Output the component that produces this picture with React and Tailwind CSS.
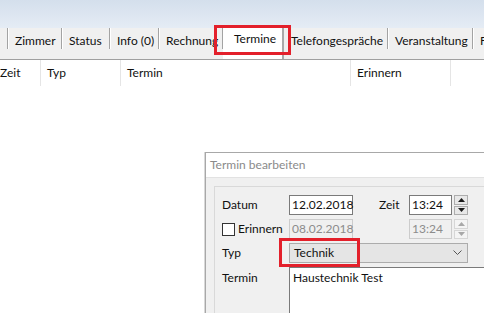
import React from "react";

const tabs = [
  { label: "", w: 6 },
  { label: "Zimmer", w: 54 },
  { label: "Status", w: 48 },
  { label: "Info (0)", w: 49 },
  { label: "Rechnung", w: 64 },
  { label: "Termine", w: 61, active: true },
  { label: "Telefongespräche", w: 104 },
  { label: "Veranstaltung", w: 85 },
  { label: "Foto", w: 40 },
];

const cols = [
  { label: "Zeit", w: 47, cls: "ml-[-6px]" },
  { label: "Typ", w: 80 },
  { label: "Termin", w: 230 },
  { label: "Erinnern", w: 100 },
  { label: "", w: 60 },
];

function Spinner({ disabled }) {
  const arrow = disabled ? "#a8a8a8" : "#1a1a1a";
  const box = disabled
    ? "border-[#d6d6d6] bg-[#f4f4f4]"
    : "border-[#adadad] bg-[#e8e8e8]";
  return (
    <div className="flex flex-col w-[16px] h-[20px] gap-[1px] pl-[2px]">
      <div className={`flex-1 border ${box} flex items-center justify-center`}>
        <svg width="7" height="4" viewBox="0 0 7 4">
          <path d="M0 4 L3.5 0 L7 4 Z" fill={arrow} />
        </svg>
      </div>
      <div className={`flex-1 border ${box} flex items-center justify-center`}>
        <svg width="7" height="4" viewBox="0 0 7 4">
          <path d="M0 0 L3.5 4 L7 0 Z" fill={arrow} />
        </svg>
      </div>
    </div>
  );
}

function Dialog() {
  return (
    <div className="absolute left-[205px] top-[152px] w-[290px] h-[170px] border border-[#a8a8a8] bg-[#f0f0f0] flex flex-col shadow-[-1px_0_0_#d8d8d8]">
      <div className="h-[25px] bg-white border-b border-[#e2e2e2] flex items-center pl-[4px] text-[12px] text-[#8a8a8a]">
        Termin bearbeiten
      </div>
      <div className="pl-[8px] pt-[8px] flex-1">
        <div className="border border-[#d9d9d9] h-full pl-[7px] pt-[8px] flex flex-col gap-[4px] text-[12px] text-[#111]">
          {/* Datum */}
          <div className="flex items-center h-[20px]">
            <span className="w-[67px]">Datum</span>
            <div className="w-[64px] h-[20px] bg-white border border-[#7a7a7a] flex items-center pl-[2px]">
              12.02.2018
            </div>
            <span className="ml-[26px] w-[30px]">Zeit</span>
            <div className="w-[43px] h-[20px] bg-white border border-[#7a7a7a] flex items-center pl-[2px]">
              13:24
            </div>
            <Spinner />
          </div>
          {/* Erinnern */}
          <div className="flex items-center h-[20px]">
            <div className="w-[67px] flex items-center">
              <span className="w-[13px] h-[13px] border border-[#333] bg-white mr-[3px]" />
              <span>Erinnern</span>
            </div>
            <div className="w-[64px] h-[20px] bg-[#f0f0f0] border border-[#cccccc] flex items-center pl-[2px] text-[#8c8c8c]">
              08.02.2018
            </div>
            <span className="ml-[26px] w-[30px]" />
            <div className="w-[43px] h-[20px] bg-[#f0f0f0] border border-[#cccccc] flex items-center pl-[2px] text-[#8c8c8c]">
              13:24
            </div>
            <Spinner disabled />
          </div>
          {/* Typ */}
          <div className="flex items-center h-[20px]">
            <span className="w-[67px]">Typ</span>
            <div className="w-[179px] h-[20px] bg-[#e5e5e5] border border-[#acacac] flex items-center justify-between pl-[4px] pr-[5px]">
              <span>Technik</span>
              <svg width="9" height="6" viewBox="0 0 9 6">
                <path d="M0.5 0.5 L4.5 4.5 L8.5 0.5" fill="none" stroke="#555" strokeWidth="1" />
              </svg>
            </div>
          </div>
          {/* Termin */}
          <div className="flex items-start flex-1">
            <span className="w-[67px] pt-[2px]">Termin</span>
            <div className="flex-1 h-full bg-white border border-[#7a7a7a] pl-[3px] pt-[1px]">
              Haustechnik Test
            </div>
          </div>
        </div>
      </div>
    </div>
  );
}

export default function App() {
  return (
    <div
      className="relative w-[484px] h-[313px] overflow-hidden bg-white flex flex-col"
      style={{ fontFamily: 'Lato, "Noto Sans", sans-serif' }}
    >
      {/* window header gradient */}
      <div className="h-[28px] bg-gradient-to-b from-[#d4dfec] to-[#e5ecf5]" />

      {/* tab strip */}
      <div className="h-[21px] bg-[#f0f0f0] flex text-[12px] text-[#111]">
        {tabs.map((t, i) =>
          t.active ? (
            <div
              key={i}
              className="relative z-10 mt-[-2px] h-[33px] bg-white border-r-2 border-[#a9a9a9] pl-[11px] pt-[5px] leading-[16px] shrink-0"
              style={{ width: t.w }}
            >
              {t.label}
            </div>
          ) : (
            <div
              key={i}
              className="h-[21px] border-r border-[#a3a3a3] shadow-[1px_0_0_#ffffff] pl-[7px] pt-[5px] leading-[16px] whitespace-nowrap overflow-hidden shrink-0"
              style={{ width: t.w }}
            >
              {t.label}
            </div>
          )
        )}
      </div>
      <div className="h-[11px] bg-[#f0f0f0] border-b border-[#a0a0a0]" />

      {/* list header */}
      <div className="h-[26px] flex text-[12px] text-[#111]">
        {cols.map((c, i) => (
          <div
            key={i}
            className={`h-full border-r border-[#e5e5e5] pl-[6px] flex items-center shrink-0 ${c.cls || ""}`}
            style={{ width: c.w }}
          >
            {c.label}
          </div>
        ))}
      </div>
      <div className="flex-1" />

      <Dialog />

      {/* highlight boxes */}
      <div className="absolute left-[214px] top-[25px] w-[77px] h-[30px] border-[3px] border-[#e3202b] z-20" />
      <div className="absolute left-[279px] top-[238px] w-[81px] h-[29px] border-[3px] border-[#e3202b] z-20" />
    </div>
  );
}
